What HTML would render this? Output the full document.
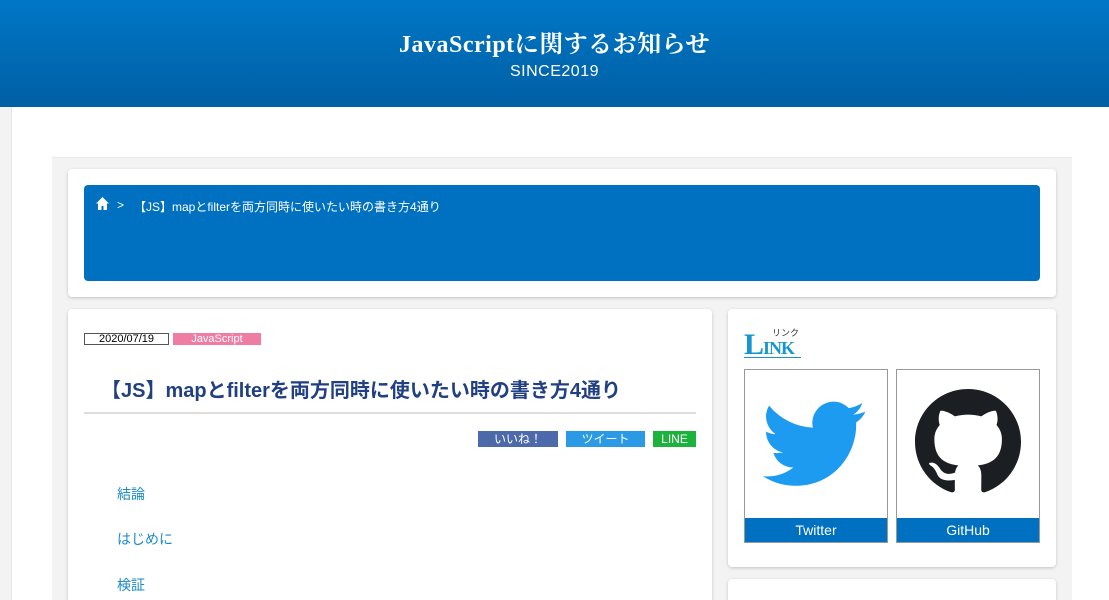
<!DOCTYPE html>
<html style="overflow:hidden;width:1109px;height:600px"><head><meta charset="utf-8"><style>
*{margin:0;padding:0;box-sizing:border-box}
body{width:1109px;height:600px;overflow:hidden;background:#fff;font-family:"Liberation Sans","Noto Sans CJK JP",sans-serif;position:relative}
.hdr{position:absolute;left:0;top:0;width:1109px;height:107px;background:linear-gradient(#0077c6,#005fa4);color:#fff;text-align:center}
.hdr h1{position:absolute;top:24px;width:100%;font-family:"Liberation Serif","Noto Serif CJK SC",serif;font-size:24px;font-weight:bold;letter-spacing:0.5px}
.hdr p{position:absolute;top:63px;width:100%;font-size:16px;letter-spacing:0.5px}
.strip{position:absolute;left:0;top:107px;width:12px;height:493px;background:#f3f3f3;border-right:1px solid #e6e6e6}
.wrap{position:absolute;left:52px;top:157px;width:1020px;height:443px;background:#f3f3f3;border-top:1px solid #e8e8e8}
.card{position:absolute;background:#fff;border-radius:4px;box-shadow:0 1px 3px rgba(0,0,0,.2)}
.a{color:#1a8ac6;font-size:14px;position:absolute;left:117px}
</style></head><body>
<div class="hdr"><h1>JavaScriptに関するお知らせ</h1><p>SINCE2019</p></div>
<div class="strip"></div>
<div class="wrap"></div>
<div class="card" style="left:68px;top:169px;width:988px;height:128px"></div>
<div style="position:absolute;left:84px;top:185px;width:956px;height:96px;background:#0071c1;border-radius:4px;color:#fff;font-size:12px">
<svg style="position:absolute;left:12px;top:12px" width="13" height="13" viewBox="0 0 13 13"><path d="M6.5 0L0 6.5h2V13h3.5V9h2v4H11V6.5h2z" fill="#fff"/></svg>
<span style="position:absolute;left:33px;top:13px">&gt;</span>
<span style="position:absolute;left:50px;top:13px">【JS】mapとfilterを両方同時に使いたい時の書き方4通り</span>
</div>
<div class="card" style="left:68px;top:309px;width:644px;height:300px"></div>
<div style="position:absolute;left:84px;top:333px;width:85px;height:12px;border:1px solid #555;font-size:11px;line-height:10px;text-align:center">2020/07/19</div>
<div style="position:absolute;left:173px;top:333px;width:88px;height:12px;background:#ee7ca3;color:#fff;font-size:11px;line-height:12px;text-align:center">JavaScript</div>
<div style="position:absolute;left:101px;top:374px;font-size:20px;font-weight:bold;color:#213f83">【JS】mapとfilterを両方同時に使いたい時の書き方4通り</div>
<div style="position:absolute;left:84px;top:412px;width:612px;height:2px;background:#ddd"></div>
<div style="position:absolute;left:478px;top:431px;width:80px;height:16px;background:#4c69a9;color:#fff;font-size:12px;text-align:center;line-height:16px">いいね！</div>
<div style="position:absolute;left:566px;top:431px;width:79px;height:16px;background:#2a9ae4;color:#fff;font-size:12px;text-align:center;line-height:16px">ツイート</div>
<div style="position:absolute;left:653px;top:431px;width:43px;height:16px;background:#1cb33c;color:#fff;font-size:12px;text-align:center;line-height:16px">LINE</div>
<div class="a" style="top:484px">結論</div>
<div class="a" style="top:529px">はじめに</div>
<div class="a" style="top:575px">検証</div>
<div class="card" style="left:728px;top:309px;width:328px;height:258px"></div>
<div style="position:absolute;left:772px;top:326px;font-size:9px;color:#333">リンク</div>
<div style="position:absolute;left:744px;top:331px;font-family:'Liberation Serif',serif;font-weight:bold;color:#1596cf;font-size:30px;line-height:28px;letter-spacing:-1px">L<span style="font-size:18px">INK</span></div>
<div style="position:absolute;left:744px;top:357px;width:57px;height:1px;background:#1596cf"></div>
<div style="position:absolute;left:744px;top:369px;width:144px;height:174px;border:1px solid #999">
<svg style="position:absolute;left:18px;top:30px" width="104" height="90" viewBox="0 0 24 20"><path fill="#1d9bf0" d="M23.6 2.3c-.9.4-1.8.6-2.8.7 1-.6 1.8-1.6 2.1-2.7-.9.6-2 1-3.1 1.2A4.9 4.9 0 0 0 11.5 6 14 14 0 0 1 1.4.9a4.9 4.9 0 0 0 1.5 6.6c-.8 0-1.6-.3-2.2-.6 0 2.4 1.7 4.4 3.900 4.8-.7.2-1.5.2-2.2.1.6 2 2.4 3.4 4.6 3.4A9.9 9.9 0 0 1 0 17.2 14 14 0 0 0 7.5 19.4c9.1 0 14-7.5 14-14v-.6c1-.7 1.8-1.600 2.1-2.5z"/></svg>
<div style="position:absolute;left:0;bottom:0;width:142px;height:24px;background:#0070c0;color:#fff;font-size:14px;text-align:center;line-height:24px">Twitter</div></div>
<div style="position:absolute;left:896px;top:369px;width:144px;height:174px;border:1px solid #999">
<svg style="position:absolute;left:18px;top:19px" width="106" height="106" viewBox="0 0 16 16"><path fill="#1b1f23" d="M8 0C3.58 0 0 3.58 0 8c0 3.54 2.29 6.53 5.470 7.59.4.07.55-.17.55-.38 0-.19-.01-.82-.01-1.49-2.01.37-2.53-.49-2.69-.94-.09-.23-.48-.94-.82-1.13-.28-.15-.68-.52-.01-.53.63-.01 1.08.58 1.23.82.72 1.21 1.87.87 2.33.66.07-.52.28-.87.51-1.07-1.78-.2-3.64-.89-3.64-3.95 0-.87.31-1.59.82-2.15-.08-.2-.36-1.02.08-2.12 0 0 .67-.21 2.2.82.64-.18 1.32-.27 2-.27.68 0 1.36.09 2 .27 1.53-1.04 2.2-.82 2.2-.82.44 1.1.16 1.92.08 2.12.51.56.82 1.27.82 2.15 0 3.07-1.870 3.75-3.65 3.95.29.25.54.73.54 1.48 0 1.07-.01 1.93-.01 2.2 0 .21.15.46.55.38A8.013 8.013 0 0 0 16 8c0-4.42-3.58-8-8-8z"/></svg>
<div style="position:absolute;left:0;bottom:0;width:142px;height:24px;background:#0070c0;color:#fff;font-size:14px;text-align:center;line-height:24px">GitHub</div></div>
<div class="card" style="left:728px;top:579px;width:328px;height:30px"></div>
</body></html>
